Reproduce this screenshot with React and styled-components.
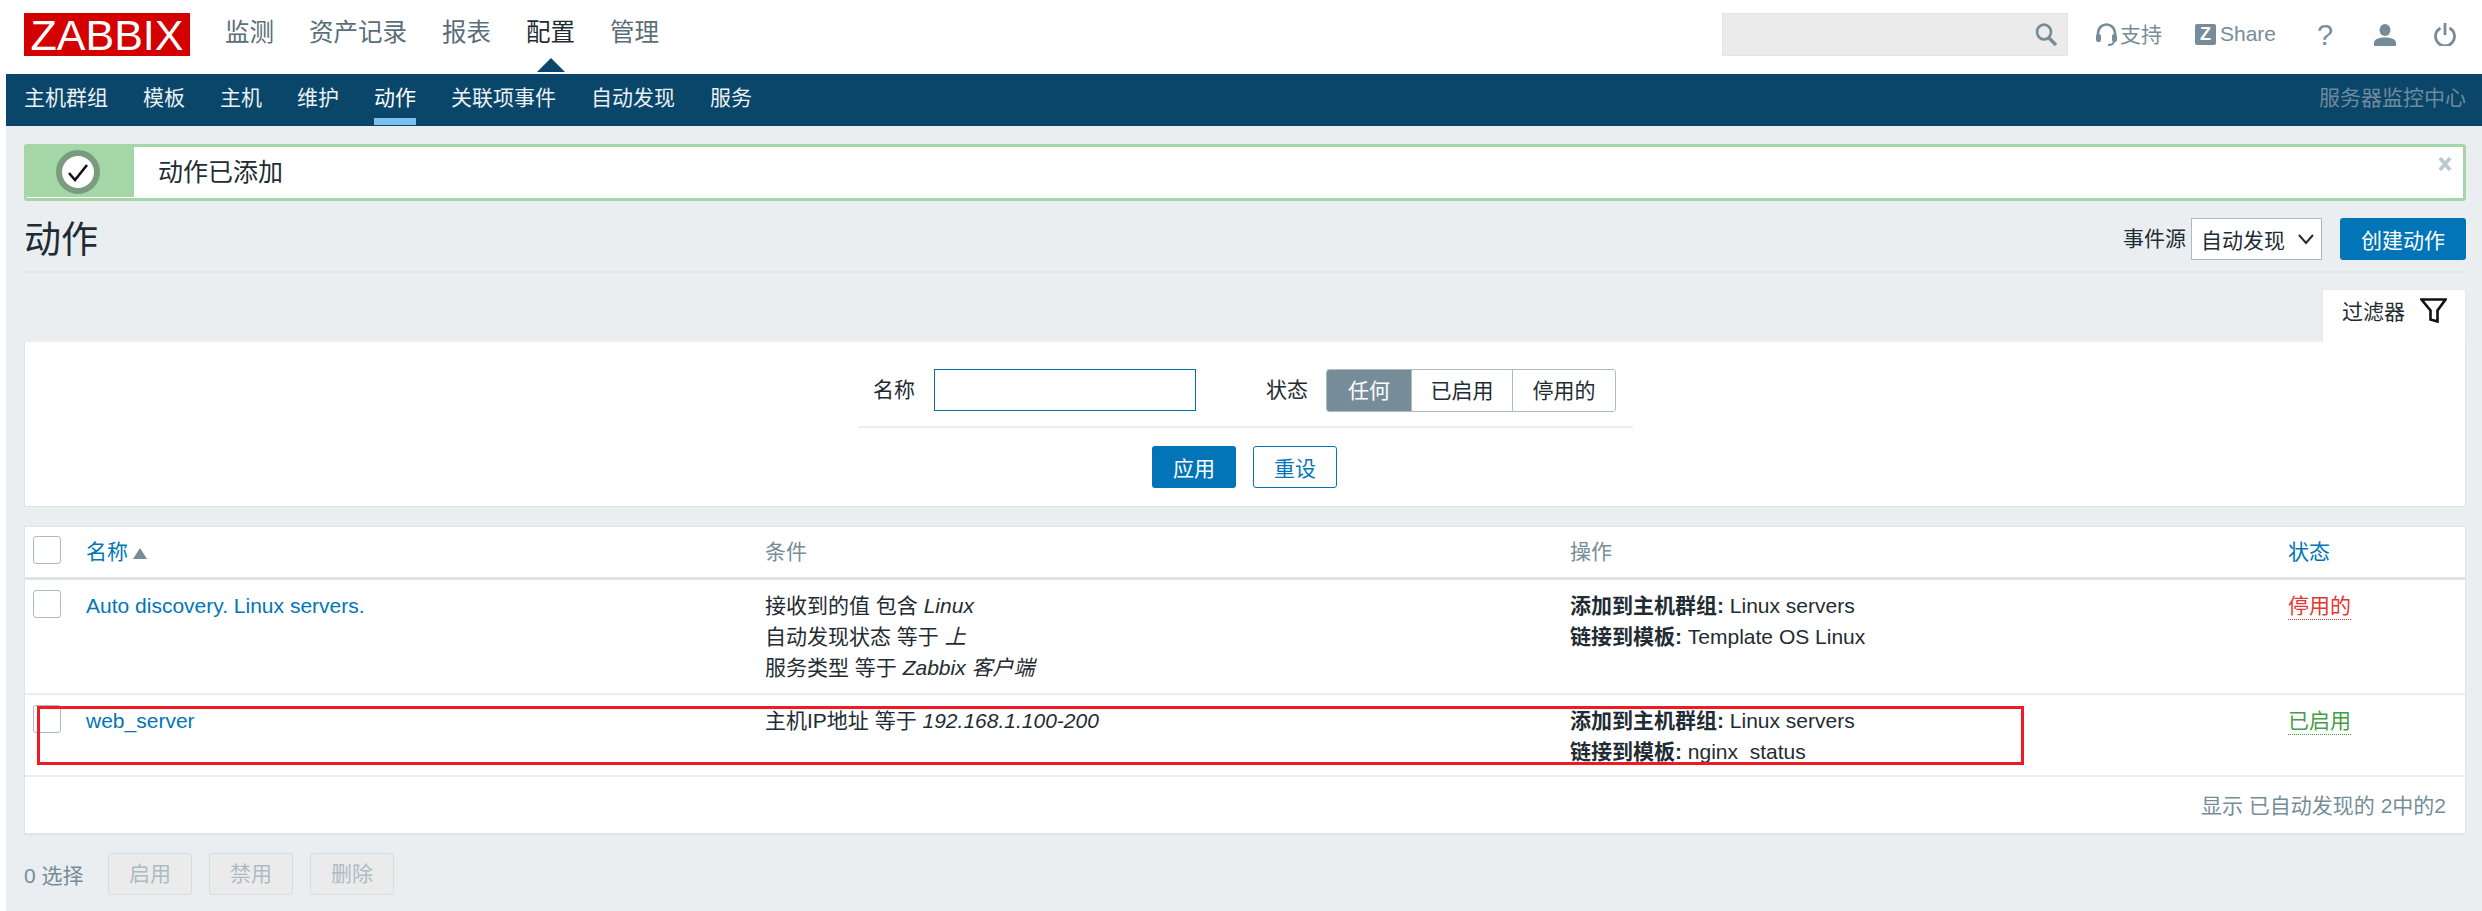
import React from 'react'
import styled, { createGlobalStyle } from 'styled-components'

const GlobalStyle = createGlobalStyle`
    html, body {
        margin: 0;
        padding: 0;
        background: #fff;
    }
    body {
        font-family: "Liberation Sans", "Noto Sans CJK SC", sans-serif;
        font-size: 21px;
        color: #1f2c33;
    }
    * {
        box-sizing: border-box;
    }
`

const mainMenu = [
    { label: '监测' },
    { label: '资产记录' },
    { label: '报表' },
    { label: '配置', active: true },
    { label: '管理' },
]

const subMenu = ['主机群组', '模板', '主机', '维护', '动作', '关联项事件', '自动发现', '服务']

const App = () => {
    return (
        <Page>
            <GlobalStyle />
            <TopBar>
                <Logo>ZABBIX</Logo>
                <MainNav>
                    {mainMenu.map(item => (
                        <MainLink key={item.label} $active={item.active}>{item.label}</MainLink>
                    ))}
                </MainNav>
                <SearchBox>
                    <svg width="23" height="23" viewBox="0 0 23 23" fill="none" stroke="#768d99" strokeWidth="2.6">
                        <ellipse cx="9" cy="9" rx="7" ry="7.4" />
                        <path d="M14 15l7 7" strokeWidth="3.4" />
                    </svg>
                </SearchBox>
                <SupportLink>
                    <svg width="23" height="24" viewBox="0 0 23 24" fill="none" stroke="#768d99" strokeWidth="2.6">
                        <path d="M3 15V10a8.500 8.500 0 0 1 17 0v5" />
                        <rect x="1" y="11" width="5" height="8" rx="2" fill="#768d99" stroke="none" />
                        <rect x="17" y="11" width="5" height="8" rx="2" fill="#768d99" stroke="none" />
                        <path d="M19 18c0 3-3 4-6 4" strokeWidth="2" />
                    </svg>
                    <span>支持</span>
                </SupportLink>
                <ShareLink>
                    <ShareMark>Z</ShareMark>
                    Share
                </ShareLink>
                <Help>?</Help>
                <IconSlot>
                    <svg width="22" height="22" viewBox="0 0 22 22" fill="#768d99">
                        <ellipse cx="11" cy="6" rx="5.500" ry="6" />
                        <path d="M0 22v-3c0-4 5-5.500 11-5.500s11 1.500 11 5.500v3z" />
                    </svg>
                </IconSlot>
                <IconSlot>
                    <svg width="22" height="23" viewBox="0 0 22 23" fill="none" stroke="#768d99" strokeWidth="2.8">
                        <path d="M6.500 5a9.500 9.500 0 1 0 9 0" />
                        <path d="M11 0v12" />
                    </svg>
                </IconSlot>
            </TopBar>
            <SubBar>
                {subMenu.map(item => (
                    <SubLink key={item} $active={item === '动作'}>{item}</SubLink>
                ))}
                <ServerName>服务器监控中心</ServerName>
            </SubBar>
            <Content>
                <Message>
                    <MessageIcon>
                        <svg width="44" height="44" viewBox="0 0 44 44">
                            <circle cx="22" cy="22" r="19" fill="#fff" stroke="#7b9b7e" strokeWidth="6" />
                            <path d="M13 23l6 7 12-15" fill="none" stroke="#111" strokeWidth="2.6" />
                        </svg>
                    </MessageIcon>
                    <MessageText>动作已添加</MessageText>
                    <MessageClose>
                        <svg width="14" height="14" viewBox="0 0 14 14" fill="none" stroke="#bec9cf" strokeWidth="3.6">
                            <path d="M2 1l10 12M12 1L2 13" />
                        </svg>
                    </MessageClose>
                </Message>
                <TitleRow>
                    <Title>动作</Title>
                    <EventLabel>事件源</EventLabel>
                    <SelectBox>
                        自动发现
                        <svg width="16" height="12" viewBox="0 0 16 12" fill="none" stroke="#1f2c33" strokeWidth="2">
                            <path d="M1 2l7 8 7-8" />
                        </svg>
                    </SelectBox>
                    <PrimaryButton $width={126}>创建动作</PrimaryButton>
                </TitleRow>
                <FilterTabs>
                    <FilterTab>
                        过滤器
                        <svg width="27" height="25" viewBox="0 0 27 25" fill="none" stroke="#111" strokeWidth="2.6">
                            <path d="M1.500 1.500h24l-8 11v11l-7-2v-9z" />
                        </svg>
                    </FilterTab>
                </FilterTabs>
                <FilterPanel>
                    <FilterFields>
                        <FieldLabel>名称</FieldLabel>
                        <NameInput />
                        <FieldLabel $left={70}>状态</FieldLabel>
                        <Segments>
                            <Segment $width={84} $active>任何</Segment>
                            <Segment $width={101}>已启用</Segment>
                            <Segment $width={103}>停用的</Segment>
                        </Segments>
                    </FilterFields>
                    <FilterButtons>
                        <PrimaryButton $width={84}>应用</PrimaryButton>
                        <OutlineButton>重设</OutlineButton>
                    </FilterButtons>
                </FilterPanel>
                <TableCard>
                    <HeadRow>
                        <CheckCell><Check /></CheckCell>
                        <LinkText>名称<SortArrow /></LinkText>
                        <HeadText>条件</HeadText>
                        <HeadText>操作</HeadText>
                        <LinkText>状态</LinkText>
                    </HeadRow>
                    <Row $height={115}>
                        <CheckCell><Check /></CheckCell>
                        <LinkText>Auto discovery. Linux servers.</LinkText>
                        <div>
                            <Line>接收到的值 包含 <i>Linux</i></Line>
                            <Line>自动发现状态 等于 <i>上</i></Line>
                            <Line>服务类型 等于 <i>Zabbix 客户端</i></Line>
                        </div>
                        <div>
                            <Line><b>添加到主机群组:</b> Linux servers</Line>
                            <Line><b>链接到模板:</b> Template OS Linux</Line>
                        </div>
                        <Status $color="#e33734">停用的</Status>
                    </Row>
                    <Row $height={82}>
                        <CheckCell><Check /></CheckCell>
                        <LinkText>web_server</LinkText>
                        <div>
                            <Line>主机IP地址 等于 <i>192.168.1.100-200</i></Line>
                        </div>
                        <div>
                            <Line><b>添加到主机群组:</b> Linux servers</Line>
                            <Line><b>链接到模板:</b> nginx_status</Line>
                        </div>
                        <Status $color="#429e47">已启用</Status>
                    </Row>
                    <Paging>显示 已自动发现的 2中的2</Paging>
                    <Highlight />
                </TableCard>
                <BottomBar>
                    <Selected>0 选择</Selected>
                    <DisabledButton>启用</DisabledButton>
                    <DisabledButton>禁用</DisabledButton>
                    <DisabledButton>删除</DisabledButton>
                </BottomBar>
            </Content>
        </Page>
    )
}

export default App

const Page = styled.div`
    height: 911px;
    padding-left: 6px;
    background: #fff;
    overflow: hidden;
`

const TopBar = styled.div`
    height: 74px;
    display: flex;
    align-items: center;
    padding: 0 7px 5px 18px;
    background: #fff;
`

const Logo = styled.div`
    width: 166px;
    height: 43px;
    line-height: 44px;
    text-align: center;
    background: #d40000;
    color: #fff;
    font-size: 43px;
`

const MainNav = styled.div`
    display: flex;
    gap: 35px;
    margin: -3px 0 0 35px;
    flex: 1;
`

const MainLink = styled.div`
    position: relative;
    font-size: 24.5px;
    line-height: 34px;
    color: ${p => (p.$active ? '#1f2c33' : '#5a6d78')};

    ${p => p.$active && `
        &::after {
            content: '';
            position: absolute;
            left: 50%;
            margin-left: -14px;
            bottom: -22px;
            border-left: 14px solid transparent;
            border-right: 14px solid transparent;
            border-bottom: 14px solid #0a466a;
        }
    `}
`

const SearchBox = styled.div`
    width: 346px;
    height: 43px;
    display: flex;
    align-items: center;
    justify-content: flex-end;
    padding-right: 9px;
    background: #ebebeb;
    border: 1px solid #e4e4e4;
`

const SupportLink = styled.div`
    display: flex;
    align-items: center;
    gap: 2px;
    margin-left: 27px;
    color: #768d99;

    span {
        margin-top: -4px;
    }
`

const ShareLink = styled.div`
    display: flex;
    align-items: center;
    gap: 4px;
    margin: -1px 0 0 33px;
    color: #768d99;
`

const ShareMark = styled.span`
    width: 21px;
    height: 21px;
    line-height: 21px;
    text-align: center;
    background: #768d99;
    color: #fff;
    font-size: 18px;
    font-weight: bold;
    border-radius: 2px;
`

const IconSlot = styled.div`
    width: 60px;
    display: flex;
    justify-content: center;
`

const Help = styled.span`
    width: 60px;
    margin-left: 19px;
    text-align: center;
    font-size: 29px;
    line-height: 30px;
    color: #768d99;
`

const SubBar = styled.div`
    height: 52px;
    display: flex;
    align-items: flex-start;
    gap: 35px;
    padding: 0 16px 0 18px;
    background: #0a466a;
`

const SubLink = styled.div`
    height: 51px;
    padding-top: 9px;
    line-height: 30px;
    color: #fff;
    border-bottom: 7px solid ${p => (p.$active ? '#7cc0ef' : 'transparent')};
    opacity: ${p => (p.$active ? 1 : 0.92)};
`

const ServerName = styled.div`
    margin-left: auto;
    padding-top: 9px;
    line-height: 30px;
    color: #6f8b9b;
`

const Content = styled.div`
    height: 785px;
    padding: 18px 16px 0 18px;
    background: #ebeef0;
`

const Message = styled.div`
    position: relative;
    height: 57px;
    display: flex;
    align-items: flex-start;
    background: #fff;
    border: 3px solid #a5d6a7;
    border-radius: 3px;
`

const MessageIcon = styled.div`
    width: 107px;
    height: 50px;
    display: flex;
    align-items: center;
    justify-content: center;
    padding-right: 5px;
    background: #a5d6a7;
`

const MessageText = styled.div`
    margin-left: 24px;
    font-size: 25px;
    line-height: 50px;
`

const MessageClose = styled.div`
    position: absolute;
    top: 10px;
    right: 11px;
    display: flex;
`

const TitleRow = styled.div`
    height: 55px;
    display: flex;
    align-items: flex-start;
    margin-top: 17px;
    border-bottom: 2px solid #e3e7ea;
`

const Title = styled.h1`
    flex: 1;
    margin: 0;
    font-size: 37px;
    font-weight: normal;
    line-height: 46px;
`

const EventLabel = styled.div`
    line-height: 42px;
    margin-right: 5px;
`

const SelectBox = styled.div`
    width: 131px;
    height: 42px;
    display: flex;
    align-items: center;
    justify-content: space-between;
    padding: 0 7px 0 9px;
    margin-right: 18px;
    background: #fff;
    border: 1px solid #acbbc3;
`

const PrimaryButton = styled.button`
    width: ${p => p.$width}px;
    height: 42px;
    padding: 0;
    background: #0275b8;
    color: #fff;
    border: none;
    border-radius: 3px;
    font: inherit;
`

const OutlineButton = styled.button`
    width: 84px;
    height: 42px;
    padding: 0;
    background: #fff;
    color: #0275b8;
    border: 1px solid #0275b8;
    border-radius: 3px;
    font: inherit;
`

const FilterTabs = styled.div`
    display: flex;
    justify-content: flex-end;
    margin-top: 16px;
`

const FilterTab = styled.div`
    width: 144px;
    height: 53px;
    display: flex;
    align-items: flex-start;
    gap: 15px;
    padding: 7px 0 0 19px;
    line-height: 30px;
    background: #fff;
    border: 1px solid #e4e9ec;
    border-bottom: none;

    svg {
        margin-top: 1px;
    }
`

const FilterPanel = styled.div`
    height: 165px;
    padding-top: 27px;
    background: #fff;
    border: 1px solid #dfe4e7;
    border-top: none;
`

const FilterFields = styled.div`
    width: 775px;
    height: 59px;
    display: flex;
    align-items: flex-start;
    margin-left: 833px;
    padding-left: 15px;
    border-bottom: 2px solid #ebeef0;
`

const FieldLabel = styled.div`
    line-height: 42px;
    margin-left: ${p => p.$left || 0}px;
    margin-right: 18px;
`

const NameInput = styled.input`
    width: 262px;
    height: 42px;
    margin: 0 0 0 1px;
    background: #fff;
    border: 1px solid #0a6ea8;
    outline: none;
`

const Segments = styled.div`
    display: flex;
    height: 43px;
    border: 1px solid #acbbc3;
    border-radius: 3px;
    overflow: hidden;
`

const Segment = styled.div`
    width: ${p => p.$width}px;
    line-height: 41px;
    text-align: center;
    background: ${p => (p.$active ? '#768d99' : '#fff')};
    color: ${p => (p.$active ? '#fff' : '#1f2c33')};
    & + & {
        border-left: 1px solid #acbbc3;
    }
`

const FilterButtons = styled.div`
    display: flex;
    justify-content: flex-start;
    gap: 17px;
    margin: 18px 0 0 1127px;
`

const TableCard = styled.div`
    position: relative;
    height: 309px;
    margin-top: 19px;
    background: #fff;
    border: 1px solid #dfe4e7;
    border-bottom-width: 2px;
`

const columns = '61px 679px 805px 718px 1fr'

const HeadRow = styled.div`
    height: 53px;
    display: grid;
    grid-template-columns: ${columns};
    align-items: start;
    padding-top: 9px;
    border-bottom: 3px solid #dfe4e7;
`

const Row = styled.div`
    height: ${p => p.$height}px;
    display: grid;
    grid-template-columns: ${columns};
    align-items: start;
    padding-top: 10px;
    border-bottom: 2px solid #ebeef0;
`

const CheckCell = styled.div`
    padding-left: 8px;
`

const Check = styled.div`
    width: 28px;
    height: 28px;
    background: #fff;
    border: 1px solid #acbbc3;
    border-radius: 3px;
`

const LinkText = styled.div`
    line-height: 31px;
    color: #0275b8;
`

const HeadText = styled.div`
    line-height: 31px;
    color: #768d99;
`

const SortArrow = styled.span`
    display: inline-block;
    margin-left: 5px;
    border-left: 7.500px solid transparent;
    border-right: 7.500px solid transparent;
    border-bottom: 11px solid #768d99;
`

const Line = styled.div`
    line-height: 31px;
    white-space: nowrap;
`

const Status = styled.div`
    justify-self: start;
    line-height: 27px;
    margin-top: 2px;
    color: ${p => p.$color};
    border-bottom: 1px dotted ${p => p.$color};
`

const Paging = styled.div`
    padding: 13px 19px 0 0;
    text-align: right;
    line-height: 31px;
    color: #768d99;
`

const Highlight = styled.div`
    position: absolute;
    left: 12px;
    top: 179px;
    width: 1987px;
    height: 59px;
    border: 3px solid #ed1c24;
    pointer-events: none;
`

const BottomBar = styled.div`
    display: flex;
    align-items: center;
    gap: 17px;
    margin-top: 18px;
`

const Selected = styled.div`
    width: 67px;
    color: #768d99;
`

const DisabledButton = styled.div`
    width: 84px;
    height: 42px;
    line-height: 40px;
    text-align: center;
    color: #acbbc3;
    background: #ebebeb;
    border: 1px solid #d5dde1;
    border-radius: 3px;
`
